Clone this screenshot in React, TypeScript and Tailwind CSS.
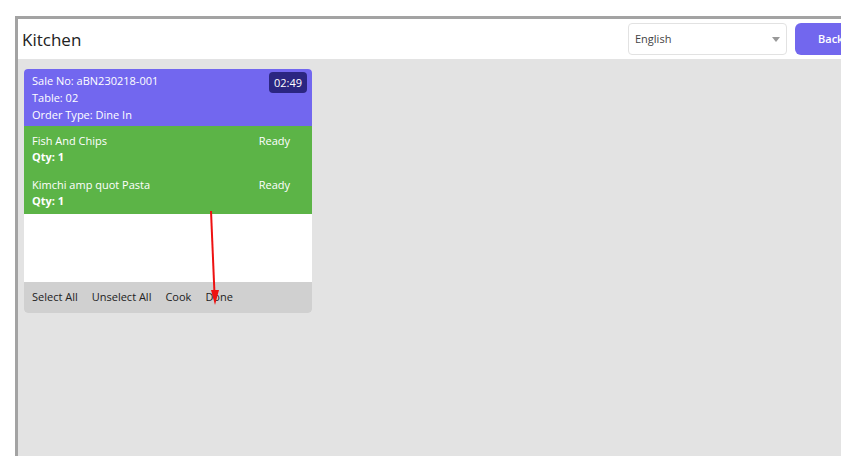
import React from 'react';

const items = [
  { name: 'Fish And Chips', qty: 1, status: 'Ready' },
  { name: 'Kimchi amp quot Pasta', qty: 1, status: 'Ready' },
];

export default function App() {
  return (
    <div className="w-[841px] h-[456px] bg-white overflow-hidden pt-4 pl-[15px] font-['Open_Sans',sans-serif]">
      <div className="h-full border-t-[3px] border-l-[3px] border-[#a3a3a3] flex flex-col">
        <header className="h-[40px] bg-white flex items-center justify-between pl-[4px] shrink-0">
          <h1 className="text-[17px] text-[#222] leading-none">Kitchen</h1>
          <div className="flex items-center gap-2 mr-[-14px]">
            <div className="w-[159px] h-[32px] border border-[#e2e2e2] rounded flex items-center justify-between px-[6px] text-[11px] text-[#444]">
              <span>English</span>
              <svg width="8" height="5" viewBox="0 0 8 5">
                <path d="M0 0h8L4 5z" fill="#999" />
              </svg>
            </div>
            <button className="w-[60px] h-[32px] bg-[#7267ee] rounded-md text-white text-[11px] font-semibold text-left pl-[23px]">
              Back
            </button>
          </div>
        </header>

        <main className="flex-1 bg-[#e3e3e3] pt-[10px] pl-[6px]">
          <div className="relative w-[288px] rounded overflow-hidden bg-white text-[11px]">
            <div className="bg-[#7267ef] text-white px-2 pt-[3px] pb-[3px] leading-[17px] flex justify-between">
              <div>
                <p>Sale No: aBN230218-001</p>
                <p>Table: 02</p>
                <p>Order Type: Dine In</p>
              </div>
              <span className="h-[21px] px-[5px] bg-[#2b2681] rounded text-[11px] leading-[21px] mr-[-3px]">
                02:49
              </span>
            </div>
            <div className="bg-[#5cb447] text-white">
              {items.map((item) => (
                <div key={item.name} className="flex justify-between pl-2 pr-[22px] pt-[7px] pb-[5px] leading-[16px]">
                  <div>
                    <p>{item.name}</p>
                    <p className="font-bold">Qty: {item.qty}</p>
                  </div>
                  <span>{item.status}</span>
                </div>
              ))}
            </div>
            <div className="h-[68px] bg-white" />
            <div className="h-[31px] bg-[#d0d0d0] flex items-center gap-[14px] pl-2 text-[11px] text-[#222]">
              <span>Select All</span>
              <span>Unselect All</span>
              <span>Cook</span>
              <span>Done</span>
            </div>
            <svg className="absolute left-[180px] top-[141px]" width="20" height="100" viewBox="0 0 20 100">
              <path d="M7 1 L10.5 84" stroke="#ee1111" strokeWidth="2" fill="none" />
              <path d="M7 80 L15 80 L11 95 Z" fill="#ee1111" />
            </svg>
          </div>
        </main>
      </div>
    </div>
  );
}
